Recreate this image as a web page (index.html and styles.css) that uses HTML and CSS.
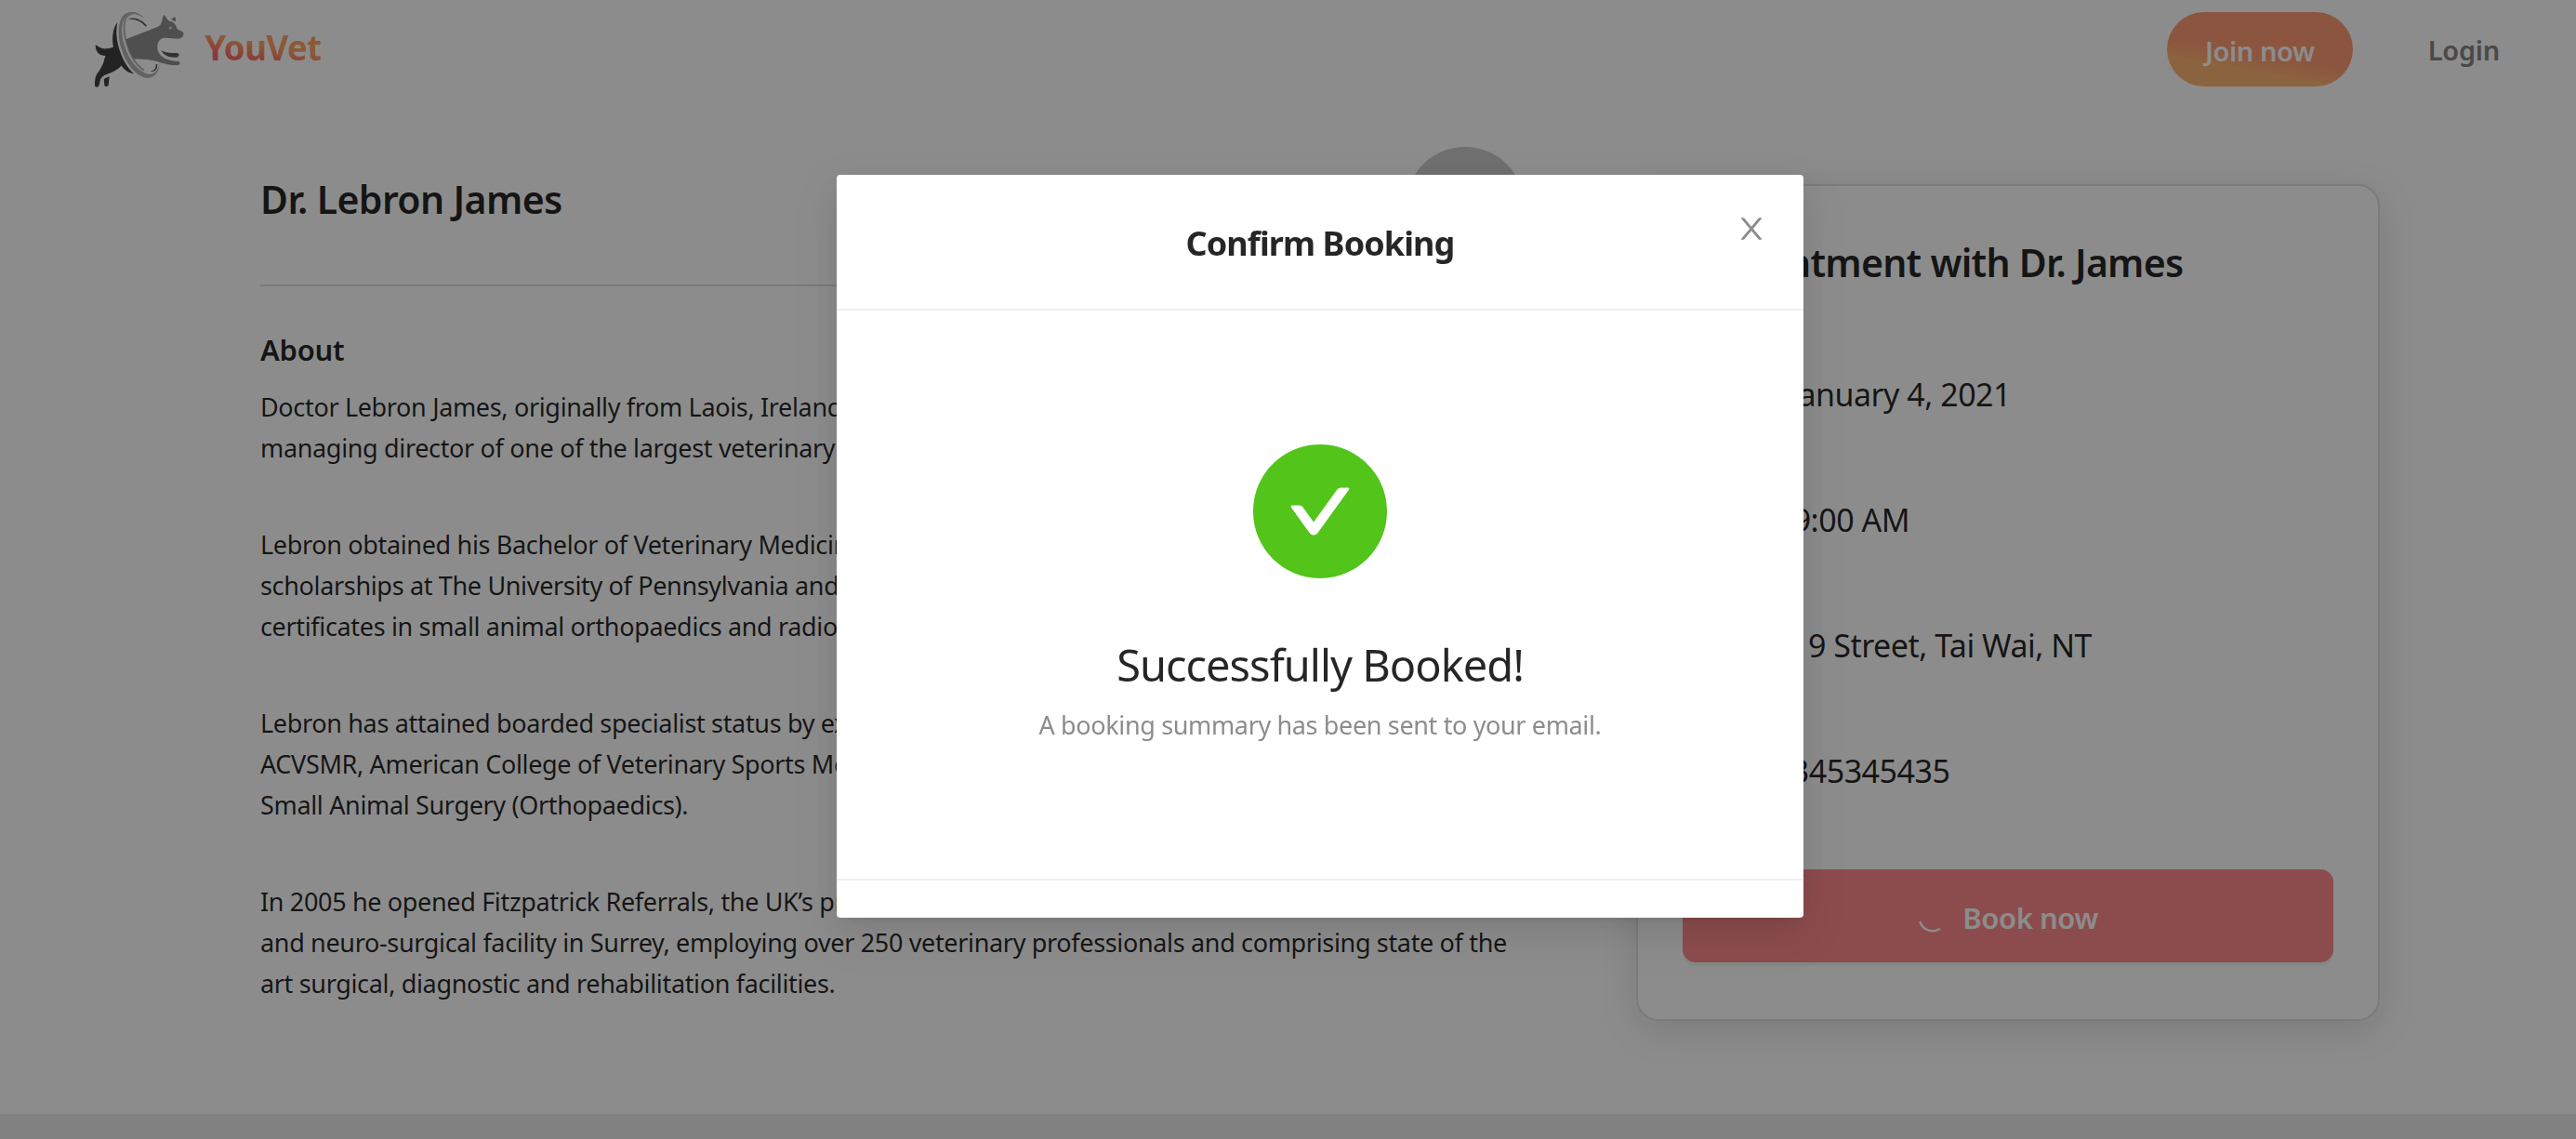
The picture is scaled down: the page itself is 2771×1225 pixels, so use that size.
FILE: index.html
```html
<!DOCTYPE html>
<html lang="en">
<head>
<meta charset="utf-8">
<title>YouVet</title>
<link rel="stylesheet" href="styles.css">
</head>
<body>
<div class="page">
  <header class="nav">
    <a class="brand">
      <svg class="logo" viewBox="0 0 315 285" aria-hidden="true">
        <path fill="#414141" d="M79 54C58 78 57 140 84 184C97 204 112 218 132 220C104 196 84 150 78 112C75 90 75 72 79 54Z"/>
        <path fill="#414141" d="M8 127C18 133 24 137 32 139C45 141 60 134 70 134L94 190C88 200 76 209 60 216C42 223 32 225 25 236C21 245 22 256 18 260C14 264 8 264 6 259C6 245 6 232 12 222C24 206 34 190 37 172L41 162C22 162 8 152 8 127Z"/>
        <path fill="#414141" d="M35 238C42 232 50 231 54 229C51 240 51 250 50 257C46 262 40 262 37 257Z"/>
        <path fill="#b2b2b2" fill-rule="evenodd" d="M168 44C150 20 124 14 104 26C82 42 78 90 90 134C103 180 130 218 162 231C190 241 212 222 215 190C206 218 190 226 170 219C134 204 108 158 97 112C90 76 93 42 112 31C130 22 150 28 168 44Z"/>
        <path fill="none" stroke="#b8b8b8" stroke-width="6" d="M128 27C100 26 96 66 105 108C115 150 136 190 164 208"/>
        <path fill="#606060" d="M113 45C132 34 156 44 174 64L170 68C154 50 136 42 113 45Z"/>
        <path fill="#606060" d="M184 212C196 212 203 204 203 190L208 189C208 206 200 216 184 212Z"/>
        <path fill="#909090" d="M106 109L210 68C224 62 222 42 229 30C236 34 238 46 247 50C260 50 268 62 272 76C280 82 288 82 292 88C294 98 286 107 275 107C258 107 240 102 226 105C207 112 203 134 213 153C223 170 246 179 277 180C284 184 280 192 272 193C236 194 206 176 172 174L131 172C119 152 110 130 106 109Z"/>
        <path fill="#909090" d="M252 44C258 42 260 38 264 36C268 41 268 46 265 52Z"/>
        <circle cx="250" cy="72" r="4.500" fill="#e0e0e0"/>
        <path fill="#5c5c5c" d="M220 145C236 155 256 152 275 154C280 158 277 167 270 167C248 169 228 162 220 145Z"/>
      </svg>
      <span class="brand-name">YouVet</span>
    </a>
    <nav class="nav-actions">
      <a class="join">Join now</a>
      <a class="login">Login</a>
    </nav>
  </header>

  <main class="content">
    <article class="profile">
      <div class="profile-head">
        <h1 class="name">Dr. Lebron James</h1>
        <span class="avatar"></span>
      </div>
      <h2 class="about">About</h2>
      <p class="bio">Doctor Lebron James, originally from Laois, Ireland, is the founder and<br>managing director of one of the largest veterinary referral practices.</p>
      <p class="bio">Lebron obtained his Bachelor of Veterinary Medicine, followed by<br>scholarships at The University of Pennsylvania and Ghent, with<br>certificates in small animal orthopaedics and radiology.</p>
      <p class="bio">Lebron has attained boarded specialist status by examination of the<br>ACVSMR, American College of Veterinary Sports Medicine, and<br>Small Animal Surgery (Orthopaedics).</p>
      <p class="bio">In 2005 he opened Fitzpatrick Referrals, the UK’s premier orthopaedic<br>and neuro-surgical facility in Surrey, employing over 250 veterinary professionals and comprising state of the<br>art surgical, diagnostic and rehabilitation facilities.</p>
    </article>

    <aside class="card">
      <h2 class="card-title">Appointment with Dr. James</h2>
      <div class="details">
        <div class="detail detail-date">Date: January 4, 2021</div>
        <div class="detail detail-time">Time: 9:00 AM</div>
        <div class="detail detail-place">Place: 9 Street, Tai Wai, NT</div>
        <div class="detail detail-phone">Phone: 345345435</div>
      </div>
      <button class="book" type="button">
        <svg class="spinner" viewBox="0 0 32 32" aria-hidden="true"><path d="M2.600 20A14 14 0 0 0 23 27.200" fill="none" stroke="#fff" stroke-width="2.400" stroke-linecap="round"/></svg>
        <span>Book now</span>
      </button>
    </aside>
  </main>
  <footer class="footer"></footer>
</div>

<div class="overlay">
  <section class="modal" role="dialog">
    <header class="modal-head">
      <h2 class="modal-title">Confirm Booking</h2>
      <svg class="close" viewBox="64 64 896 896" aria-hidden="true"><path fill="#8c8c8c" d="M563.800 512l262.500-312.900c4.400-5.200.7-13.100-6.100-13.100h-79.800c-4.700 0-9.200 2.100-12.300 5.700L511.600 449.800 295.100 191.700c-3-3.600-7.500-5.700-12.300-5.700H203c-6.800 0-10.500 7.900-6.100 13.100L459.400 512 196.900 824.900A7.950 7.950 0 00203 838h79.800c4.700 0 9.200-2.100 12.300-5.700l216.500-258.100 216.500 258.100c3 3.600 7.500 5.700 12.300 5.700h79.800c6.800 0 10.500-7.900 6.100-13.100L563.800 512z"/></svg>
    </header>
    <div class="modal-body">
      <svg class="success" viewBox="64 64 896 896" aria-hidden="true"><path fill="#52c41a" d="M512 64C264.600 64 64 264.600 64 512s200.600 448 448 448 448-200.600 448-448S759.400 64 512 64zm193.500 301.700l-210.600 292a31.800 31.800 0 01-51.700 0L318.500 484.900c-3.800-5.300 0-12.700 6.500-12.700h46.900c10.200 0 19.900 4.900 25.900 13.300l71.200 98.800 157.200-218c6-8.300 15.600-13.300 25.900-13.300H699c6.500 0 10.300 7.400 6.500 12.700z"/></svg>
      <p class="result-title">Successfully Booked!</p>
      <p class="result-sub">A booking summary has been sent to your email.</p>
    </div>
    <footer class="modal-foot"></footer>
  </section>
</div>
</body>
</html>
```
FILE: styles.css
```css
* { box-sizing: border-box; }

body {
  margin: 0;
  height: 1225px;
  overflow: hidden;
  background: #fff;
  color: rgba(0, 0, 0, .85);
  font-family: "Noto Sans", "Open Sans", sans-serif;
}

h1, h2, p { margin: 0; font-weight: 400; white-space: nowrap; }

.page {
  height: 1225px;
  display: flex;
  flex-direction: column;
}

/* Top bar */
.nav {
  height: 106px;
  padding: 0 82px 0 100px;
  display: flex;
  justify-content: space-between;
  align-items: center;
}

.brand { display: flex; align-items: center; gap: 15px; }
.logo { width: 105px; height: 95px; }

.brand-name {
  margin-top: -5px;
  font: 700 37px/52px "Noto Sans", sans-serif;
  letter-spacing: -.77px;
  background: linear-gradient(10deg, #ff6868 28%, #ffa366 54%);
  -webkit-background-clip: text;
  background-clip: text;
  color: transparent;
}

.nav-actions {
  display: flex;
  align-items: center;
  gap: 81px;
  font-size: 29px;
  font-weight: 600;
  line-height: 80px;
}

.join {
  width: 200px;
  height: 80px;
  padding-top: 2px;
  border-radius: 40px;
  background: linear-gradient(190deg, #ff9b74 55%, #ffb474 72%);
  color: #fff;
  text-align: center;
  letter-spacing: -.41px;
}

.login { padding-top: 2px; color: #868686; letter-spacing: -.27px; }

/* Page body */
.content {
  height: 1092px;
  padding: 52px 211px 0 280px;
  display: flex;
  justify-content: space-between;
  align-items: flex-start;
}

.profile { width: 1360px; }

.profile-head {
  height: 150px;
  border-bottom: 2px solid #e0e0e0;
  display: flex;
  justify-content: space-between;
  align-items: flex-start;
}

.name {
  margin-top: 26px;
  font-size: 41px;
  font-weight: 600;
  line-height: 60px;
  letter-spacing: -.62px;
}

.avatar { width: 128px; height: 128px; border-radius: 50%; background: #ccc; }

.about {
  margin: 43px 0 15px;
  font-size: 31px;
  font-weight: 600;
  line-height: 50px;
  letter-spacing: -.28px;
}

.bio {
  margin-bottom: 60px;
  font-size: 27px;
  line-height: 44px;
  letter-spacing: -.34px;
}

.card {
  width: 800px;
  height: 900px;
  margin-top: 40px;
  padding: 51px 48px 0;
  border: 2px solid #e0e0e0;
  border-radius: 24px;
  background: #fff;
  box-shadow: 0 10px 40px rgba(0, 0, 0, .13);
}

.card-title {
  width: 538px;
  font-size: 41px;
  font-weight: 600;
  line-height: 62px;
  letter-spacing: -.75px;
  text-align: right;
}

.details {
  height: 541px;
  margin-top: 43px;
  display: grid;
  grid-template-rows: repeat(4, 1fr);
  align-items: center;
}

.detail {
  font-size: 34px;
  line-height: 54px;
  letter-spacing: -.5px;
  text-align: right;
  white-space: nowrap;
}

.detail-date { width: 353px; }
.detail-time { width: 244px; }
.detail-place { width: 440px; }
.detail-phone { width: 285px; }

.book {
  width: 700px;
  height: 100px;
  margin-top: 38px;
  padding: 0;
  border: 0;
  border-radius: 14px;
  background: #ff8a8c;
  box-shadow: 0 4px 0 rgba(0, 0, 0, .045);
  color: #fff;
  display: flex;
  justify-content: center;
  align-items: center;
  gap: 16px;
  font: 600 31px/48px "Noto Sans", sans-serif;
  letter-spacing: -.46px;
}

.book span { margin-top: 4px; }
.spinner { width: 32px; height: 32px; margin-top: 6px; }

.footer { flex: 1; background: #ededed; }

/* Dialog */
.overlay {
  position: fixed;
  inset: 0;
  padding: 188px 831px 0 900px;
  background: rgba(0, 0, 0, .45);
}

.modal {
  width: 1040px;
  height: 799px;
  border-radius: 4px;
  background: #fff;
  box-shadow: 0 6px 12px -8px rgba(0, 0, 0, .12), 0 12px 32px rgba(0, 0, 0, .08), 0 18px 56px 16px rgba(0, 0, 0, .05);
}

.modal-head {
  position: relative;
  height: 146px;
  padding-top: 3px;
  border-bottom: 2px solid #f0f0f0;
  display: flex;
  justify-content: center;
  align-items: center;
}

.modal-title {
  font-size: 36px;
  font-weight: 700;
  letter-spacing: -.9px;
  line-height: 56px;
}

.close {
  position: absolute;
  top: 42px;
  right: 40px;
  width: 32px;
  height: 32px;
}

.modal-body {
  height: 611px;
  padding-top: 144px;
  display: flex;
  flex-direction: column;
  align-items: center;
}

.success { width: 144px; height: 144px; }

.result-title {
  margin-top: 50px;
  font-size: 47px;
  line-height: 86px;
  letter-spacing: -1px;
}

.result-sub {
  color: #8c8c8c;
  font-size: 27px;
  line-height: 44px;
  letter-spacing: -.36px;
}

.modal-foot { height: 42px; border-top: 2px solid #f0f0f0; }
```
